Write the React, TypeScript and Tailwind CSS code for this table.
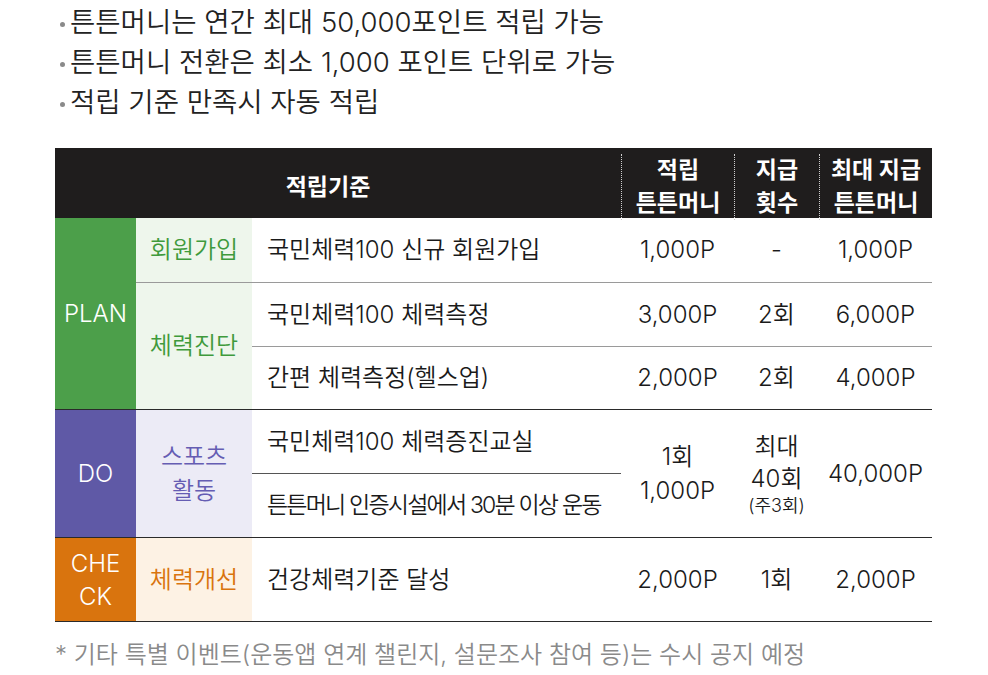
import React from "react";

const FONT = { fontFamily: 'Inter, "Noto Sans CJK KR", sans-serif' };

function Bullet({ children }: { children: React.ReactNode }) {
  return (
    <div className="flex items-center h-[40px] text-[27.5px] text-[#222]">
      <span className="w-[5px] h-[5px] rounded-full bg-[#8a8a8a] ml-[5px] mr-[5px] mt-[2px] shrink-0" />
      <span>{children}</span>
    </div>
  );
}

const LIGHT = "border-[#9a9a9a]";
const DARK = "border-[#2a2a2a]";

export default function App() {
  return (
    <div className="w-[988px] h-[675px] bg-white overflow-hidden font-[350]" style={FONT}>
      <div className="pl-[55px] pt-[3px]">
        <Bullet>튼튼머니는 연간 최대 50,000포인트 적립 가능</Bullet>
        <Bullet>튼튼머니 전환은 최소 1,000 포인트 단위로 가능</Bullet>
        <Bullet>적립 기준 만족시 자동 적립</Bullet>
      </div>

      <div className="ml-[55px] mt-[25px] w-[877px]">
        {/* header */}
        <div className="grid grid-cols-[566px_113px_85px_113px] h-[70px] bg-[#1f1d1d] text-white font-bold text-[23px] leading-[33px]">
          <div className="flex items-center justify-center pr-[20px]">적립기준</div>
          <div className="py-[6px]">
            <div className="h-full border-l border-dotted border-[#cfcfcf] flex flex-col items-center justify-center">
              <span>적립</span>
              <span>튼튼머니</span>
            </div>
          </div>
          <div className="py-[6px]">
            <div className="h-full border-l border-dotted border-[#cfcfcf] flex flex-col items-center justify-center">
              <span>지급</span>
              <span>횟수</span>
            </div>
          </div>
          <div className="py-[6px]">
            <div className="h-full border-l border-dotted border-[#cfcfcf] flex flex-col items-center justify-center">
              <span>최대 지급</span>
              <span>튼튼머니</span>
            </div>
          </div>
        </div>

        {/* body */}
        <div className="grid grid-cols-[81px_116px_369px_113px_85px_113px] grid-rows-[65px_64px_63px_64px_64px_84px] text-[24px] text-[#1a1a1a]">
          {/* PLAN */}
          <div className={`row-span-3 bg-[#4c9f4a] text-white flex items-center justify-center border-b ${DARK}`}>PLAN</div>
          <div className={`bg-[#eef6ec] text-[#3f9a3c] flex items-center justify-center border-b ${LIGHT}`}>회원가입</div>
          <div className={`flex items-center pl-[15px] border-b ${LIGHT}`}>국민체력100 신규 회원가입</div>
          <div className={`flex items-center justify-center border-b ${LIGHT}`}>1,000P</div>
          <div className={`flex items-center justify-center border-b ${LIGHT}`}>-</div>
          <div className={`flex items-center justify-center border-b ${LIGHT}`}>1,000P</div>

          <div className={`row-span-2 bg-[#eef6ec] text-[#3f9a3c] flex items-center justify-center border-b ${DARK}`}>체력진단</div>
          <div className={`flex items-center pl-[15px] border-b ${LIGHT}`}>국민체력100 체력측정</div>
          <div className={`flex items-center justify-center border-b ${LIGHT}`}>3,000P</div>
          <div className={`flex items-center justify-center border-b ${LIGHT}`}>2회</div>
          <div className={`flex items-center justify-center border-b ${LIGHT}`}>6,000P</div>

          <div className={`flex items-center pl-[15px] border-b ${DARK}`}>간편 체력측정(헬스업)</div>
          <div className={`flex items-center justify-center border-b ${DARK}`}>2,000P</div>
          <div className={`flex items-center justify-center border-b ${DARK}`}>2회</div>
          <div className={`flex items-center justify-center border-b ${DARK}`}>4,000P</div>

          {/* DO */}
          <div className={`row-span-2 bg-[#5f59a6] text-white flex items-center justify-center border-b ${DARK}`}>DO</div>
          <div className={`row-span-2 bg-[#ecebf6] text-[#655db3] flex flex-col items-center justify-center leading-[34px] border-b ${DARK}`}>
            <span>스포츠</span>
            <span>활동</span>
          </div>
          <div className={`flex items-center pl-[15px] border-b border-[#555]`}>국민체력100 체력증진교실</div>
          <div className={`row-span-2 flex flex-col items-center justify-center leading-[34px] border-b ${DARK}`}>
            <span>1회</span>
            <span>1,000P</span>
          </div>
          <div className={`row-span-2 flex flex-col items-center justify-center border-b ${DARK}`}>
            <span className="leading-[32px]">최대</span>
            <span className="leading-[32px]">40회</span>
            <span className="text-[18px] leading-[22px]">(주3회)</span>
          </div>
          <div className={`row-span-2 flex items-center justify-center border-b ${DARK}`}>40,000P</div>
          <div className={`flex items-center pl-[15px] whitespace-nowrap text-[23px] tracking-[-1.8px] border-b ${DARK}`}>튼튼머니 인증시설에서 30분 이상 운동</div>

          {/* CHECK */}
          <div className={`bg-[#d9740e] text-white flex flex-col items-center justify-center leading-[33px] border-b ${DARK}`}>
            <span>CHE</span>
            <span>CK</span>
          </div>
          <div className={`bg-[#fdf2e4] text-[#d9740e] flex items-center justify-center border-b ${DARK}`}>체력개선</div>
          <div className={`flex items-center pl-[15px] border-b ${DARK}`}>건강체력기준 달성</div>
          <div className={`flex items-center justify-center border-b ${DARK}`}>2,000P</div>
          <div className={`flex items-center justify-center border-b ${DARK}`}>1회</div>
          <div className={`flex items-center justify-center border-b ${DARK}`}>2,000P</div>
        </div>

        <div className="mt-[18px] text-[24px] leading-[30px] text-[#8a8a8a]">
          * 기타 특별 이벤트(운동앱 연계 챌린지, 설문조사 참여 등)는 수시 공지 예정
        </div>
      </div>
    </div>
  );
}
